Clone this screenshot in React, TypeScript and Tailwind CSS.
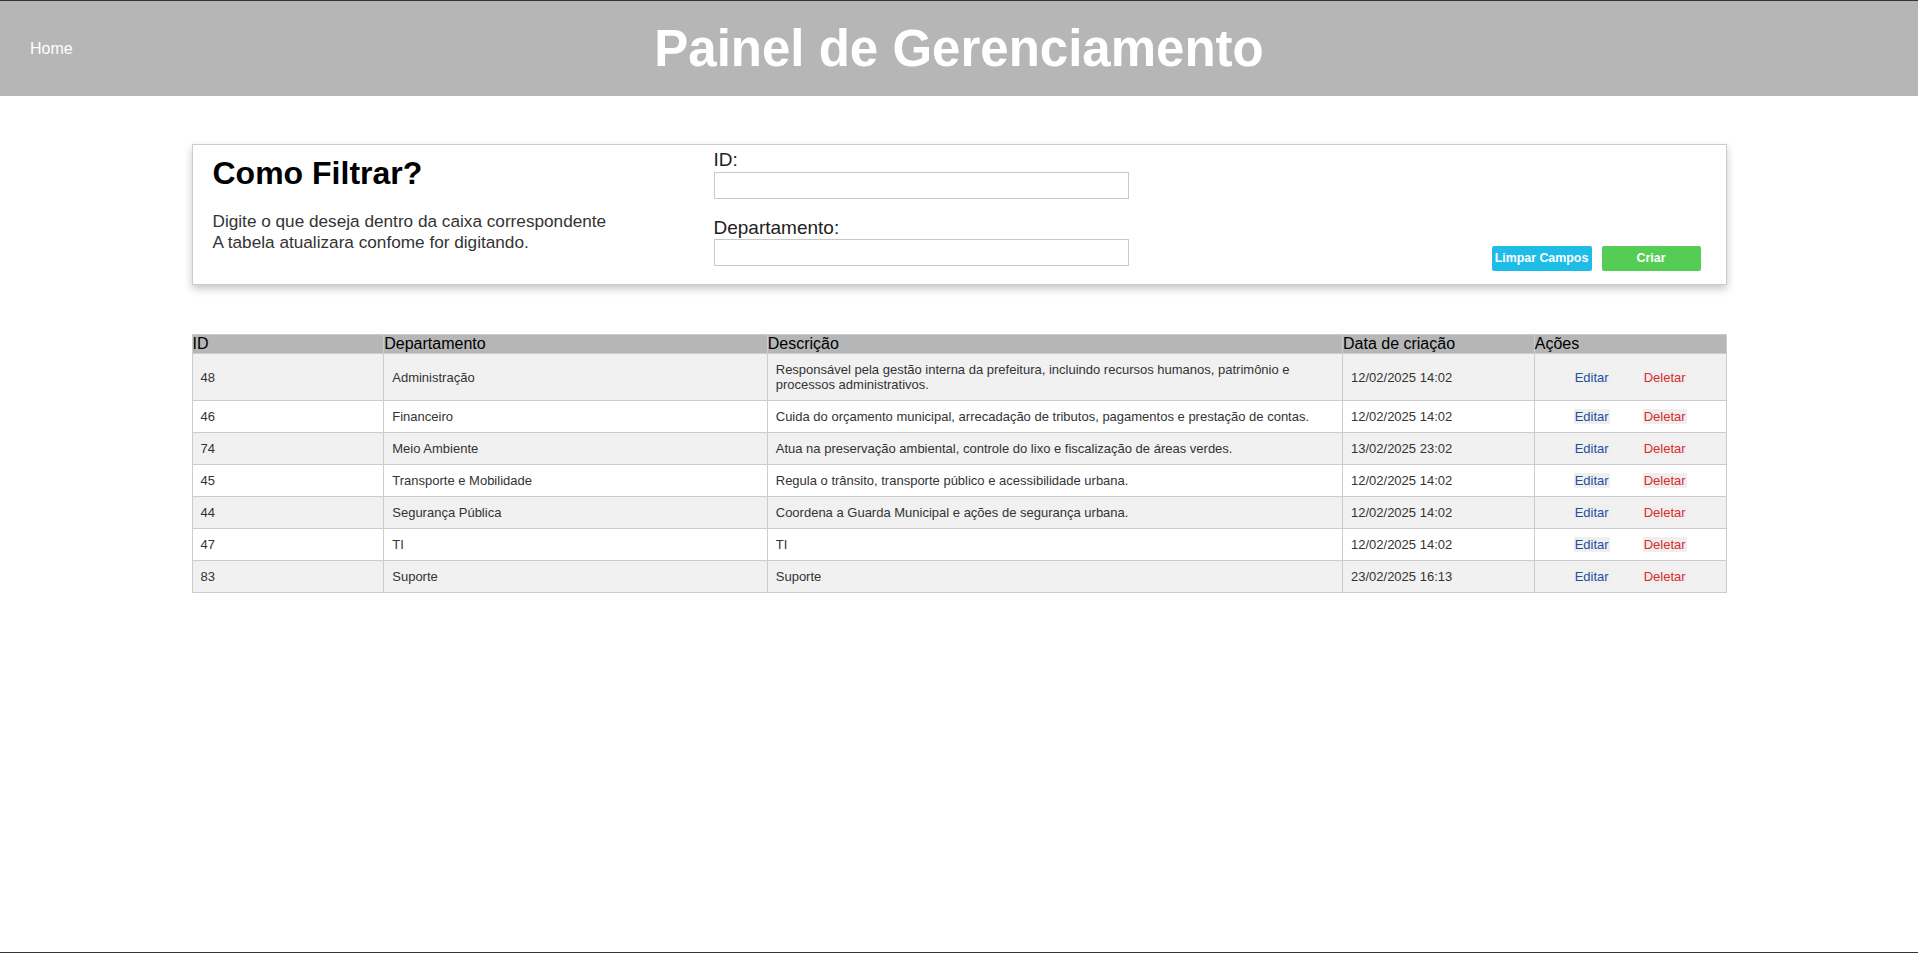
import React from "react";

const rows = [
  { id: "48", dep: "Administração", desc: "Responsável pela gestão interna da prefeitura, incluindo recursos humanos, patrimônio e processos administrativos.", date: "12/02/2025 14:02" },
  { id: "46", dep: "Financeiro", desc: "Cuida do orçamento municipal, arrecadação de tributos, pagamentos e prestação de contas.", date: "12/02/2025 14:02" },
  { id: "74", dep: "Meio Ambiente", desc: "Atua na preservação ambiental, controle do lixo e fiscalização de áreas verdes.", date: "13/02/2025 23:02" },
  { id: "45", dep: "Transporte e Mobilidade", desc: "Regula o trânsito, transporte público e acessibilidade urbana.", date: "12/02/2025 14:02" },
  { id: "44", dep: "Segurança Pública", desc: "Coordena a Guarda Municipal e ações de segurança urbana.", date: "12/02/2025 14:02" },
  { id: "47", dep: "TI", desc: "TI", date: "12/02/2025 14:02" },
  { id: "83", dep: "Suporte", desc: "Suporte", date: "23/02/2025 16:13" },
];

export default function App() {
  return (
    <div className="w-full h-[953px] bg-white border-t border-b border-[#333] font-['Liberation_Sans',Arial,sans-serif] overflow-hidden">
      <header className="h-[95px] bg-[#b7b6b7] grid grid-cols-[1fr_auto_1fr] items-center">
        <div className="pl-[30px] text-white text-[16px] leading-[18px]">Home</div>
        <h1 className="text-white font-bold text-[51px] leading-none">Painel de Gerenciamento</h1>
        <div />
      </header>

      <section className="w-[1535px] mx-auto mt-[48px] h-[141px] bg-white border border-[#cccccc] shadow-[0_4px_8px_rgba(0,0,0,0.22)] flex pl-[20px] pr-[25px]">
        <div className="w-[501px] shrink-0">
          <h2 className="mt-[10px] text-[32px] font-bold leading-[37px] text-black">Como Filtrar?</h2>
          <p className="mt-[19px] text-[17.2px] leading-[21px] text-[#333]">
            Digite o que deseja dentro da caixa correspondente
            <br />
            A tabela atualizara confome for digitando.
          </p>
        </div>
        <div className="w-[415px] shrink-0 pt-[4px] text-[#222]">
          <div className="text-[19px] leading-[22px]">ID:</div>
          <input className="mt-[1px] block w-[415px] h-[27px] border border-[#c8c8c8] bg-white outline-none" />
          <div className="mt-[18px] text-[19px] leading-[22px]">Departamento:</div>
          <input className="block w-[415px] h-[27px] border border-[#c8c8c8] bg-white outline-none" />
        </div>
        <div className="flex-1 flex items-end justify-end gap-[10px] pb-[13px]">
          <button className="w-[100px] h-[25px] rounded-[2px] bg-[#1ebde8] text-white font-bold text-[12.4px] leading-none">Limpar Campos</button>
          <button className="w-[99px] h-[25px] rounded-[2px] bg-[#55cd55] text-white font-bold text-[12.4px] leading-none">Criar</button>
        </div>
      </section>

      <table className="w-[1535px] mx-auto mt-[49px] table-fixed border-collapse">
        <colgroup>
          <col className="w-[12.5%]" />
          <col className="w-[25%]" />
          <col className="w-[37.5%]" />
          <col className="w-[12.5%]" />
          <col className="w-[12.5%]" />
        </colgroup>
        <thead>
          <tr className="bg-[#b7b6b7]">
            {["ID", "Departamento", "Descrição", "Data de criação", "Ações"].map((h) => (
              <th key={h} className="p-0 text-left font-normal text-[16px] leading-[18px] text-black border border-[#cccccc]">{h}</th>
            ))}
          </tr>
        </thead>
        <tbody>
          {rows.map((r, i) => (
            <tr key={r.id} className={i % 2 === 0 ? "bg-[#f1f1f1]" : "bg-white"}>
              <td className="p-[8px] text-[13px] leading-[15px] text-[#333] border border-[#cccccc]">{r.id}</td>
              <td className="p-[8px] text-[13px] leading-[15px] text-[#333] border border-[#cccccc]">{r.dep}</td>
              <td className="p-[8px] text-[13px] leading-[15px] text-[#333] border border-[#cccccc]">{r.desc}</td>
              <td className="p-[8px] text-[13px] leading-[15px] text-[#333] border border-[#cccccc]">{r.date}</td>
              <td className="p-[8px] text-[13px] leading-[15px] border border-[#cccccc]">
                <div className="flex justify-center gap-[33px]">
                  <button className="px-[1px] bg-[#efefef] text-[#1d4fa3] text-[13px] leading-[15px]">Editar</button>
                  <button className="px-[1px] bg-[#efefef] text-[#d92b2b] text-[13px] leading-[15px]">Deletar</button>
                </div>
              </td>
            </tr>
          ))}
        </tbody>
      </table>
    </div>
  );
}
